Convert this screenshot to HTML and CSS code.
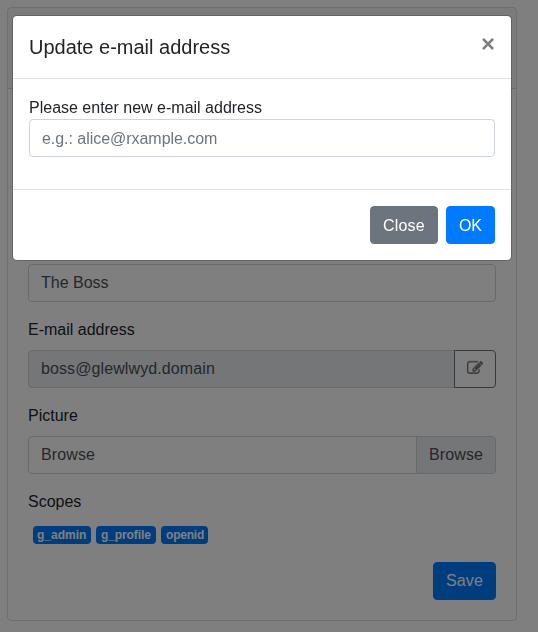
FILE: index.html
```html
<!DOCTYPE html>
<html lang="en">
<head>
<meta charset="utf-8">
<title>Profile</title>
<link rel="stylesheet" href="styles.css">
</head>
<body>
<main class="card">
  <div class="card-header"></div>
  <form class="card-body">
    <div class="group group-name">
      <div class="control">The Boss</div>
    </div>
    <div class="group">
      <div class="label">E-mail address</div>
      <div class="input-group">
        <div class="control control-disabled">boss@glewlwyd.domain</div>
        <button type="button" class="btn btn-outline">
          <svg class="icon" viewBox="0 0 1792 1792"><path d="M888 1184l116-116-152-152-116 116v56h96v96h56zm440-720q-16-16-33 1l-350 350q-17 17-1 33t33-1l350-350q17-17 1-33zm80 594v190q0 119-84.500 203.500t-203.500 84.500h-832q-119 0-203.500-84.500t-84.500-203.500v-832q0-119 84.500-203.500t203.500-84.500h832q63 0 117 25 15 7 18 23 3 17-9 29l-49 49q-14 14-32 8-23-6-45-6h-832q-66 0-113 47t-47 113v832q0 66 47 113t113 47h832q66 0 113-47t47-113v-126q0-13 9-22l64-64q15-15 35-7t20 29zm-96-738l288 288-672 672h-288v-288zm444 132l-92 92-288-288 92-92q28-28 68-28t68 28l152 152q28 28 28 68t-28 68z"/></svg>
        </button>
      </div>
    </div>
    <div class="group">
      <div class="label">Picture</div>
      <div class="input-group">
        <div class="control file-name">Browse</div>
        <div class="addon">Browse</div>
      </div>
    </div>
    <div class="label">Scopes</div>
    <div class="badges">
      <span class="badge">g_admin</span>
      <span class="badge">g_profile</span>
      <span class="badge">openid</span>
    </div>
    <div class="actions">
      <button type="button" class="btn btn-primary btn-save">Save</button>
    </div>
  </form>
</main>
<div class="backdrop">
  <section class="modal">
    <header class="modal-header">
      <h5 class="modal-title">Update e-mail address</h5>
      <button type="button" class="close">×</button>
    </header>
    <div class="modal-body">
      <div class="prompt">Please enter new e-mail address</div>
      <input class="control" type="text" placeholder="e.g.: alice@rxample.com">
    </div>
    <footer class="modal-footer">
      <button type="button" class="btn btn-secondary">Close</button>
      <button type="button" class="btn btn-primary">OK</button>
    </footer>
  </section>
</div>
</body>
</html>
```
FILE: styles.css
```css
*, *::before, *::after {
  box-sizing: border-box;
}

body {
  margin: 0;
  height: 632px;
  overflow: hidden;
  padding: 7px 21px 0 7px;
  font: 400 16px/1.5 "Liberation Sans", Arial, sans-serif;
  color: #212529;
  background: #fff;
}

.card {
  border: 1px solid rgba(0, 0, 0, .125);
  border-radius: 4px;
}

.card-header {
  height: 81px;
  background: rgba(0, 0, 0, .03);
  border-bottom: 1px solid rgba(0, 0, 0, .125);
}

.card-body {
  padding: 20px;
}

.group {
  margin-bottom: 16px;
}

.group-name {
  padding-top: 155px;
}

.label {
  margin-bottom: 8px;
}

.control {
  display: block;
  width: 100%;
  height: 38px;
  padding: 6px 12px;
  font: inherit;
  color: #495057;
  background: #fff;
  border: 1px solid #ced4da;
  border-radius: 4px;
}

.control::placeholder {
  color: #6c757d;
  opacity: 1;
}

.control-disabled {
  letter-spacing: .1px;
  background: #e9ecef;
}

.input-group {
  display: flex;
}

.input-group .control {
  flex: 1;
  border-radius: 4px 0 0 4px;
}

.input-group .btn,
.addon {
  margin-left: -1px;
  border-radius: 0 4px 4px 0;
}

.file-name,
.addon {
  letter-spacing: .12px;
}

.addon {
  width: 80px;
  padding: 6px 12px;
  color: #495057;
  background: #e9ecef;
  border: 1px solid #ced4da;
}

.btn {
  height: 38px;
  padding: 6px 12px;
  font: inherit;
  color: #fff;
  border: 1px solid transparent;
  border-radius: 4px;
}

.btn-primary {
  background: #007bff;
  border-color: #007bff;
}

.btn-secondary {
  width: 68px;
  letter-spacing: .15px;
  background: #6c757d;
  border-color: #6c757d;
}

.btn-save {
  width: 63px;
  letter-spacing: .15px;
}

.btn-outline {
  width: 42px;
  padding: 5px 12px 7px;
  color: #6c757d;
  background: transparent;
  border-color: #6c757d;
}

.icon {
  display: block;
  width: 16px;
  height: 16px;
  fill: currentColor;
  stroke: currentColor;
  stroke-width: 40;
}

.badges {
  display: flex;
  gap: 5px;
  height: 40px;
  padding: 4px 5px 0;
}

.badge {
  height: 18px;
  padding: 3px 4px;
  font-size: 12px;
  font-weight: 700;
  line-height: 12px;
  color: #fff;
  background: #007bff;
  border-radius: 4px;
}

.badge:nth-child(1) {
  width: 58px;
}

.badge:nth-child(2) {
  width: 60px;
  padding-left: 5px;
  letter-spacing: -.1px;
}

.badge:nth-child(3) {
  width: 47px;
  padding-left: 5px;
  letter-spacing: -.2px;
}

.actions {
  display: flex;
  justify-content: flex-end;
}

.backdrop {
  position: fixed;
  inset: 0;
  padding: 15px 26px 0 12px;
  background: rgba(0, 0, 0, .5);
}

.modal {
  background: #fff;
  background-clip: padding-box;
  border: 1px solid rgba(0, 0, 0, .2);
  border-radius: 5px;
}

.modal-header {
  display: flex;
  justify-content: space-between;
  align-items: flex-start;
  height: 63px;
  padding: 16px;
  border-bottom: 1px solid #dee2e6;
}

.modal-title {
  margin: 0;
  font-size: 20px;
  font-weight: 500;
  line-height: 30px;
}

.close {
  padding: 0;
  font: 700 24px/24px "Liberation Sans", Arial, sans-serif;
  color: #000;
  background: none;
  border: 0;
  opacity: .5;
}

.modal-body {
  height: 110px;
  padding: 16px;
}

.prompt {
  height: 24px;
  padding-top: 1px;
}

.modal-body .control {
  padding: 8px 12px 6px;
  letter-spacing: -.04px;
}

.modal-footer {
  display: flex;
  justify-content: flex-end;
  gap: 8px;
  padding: 16px;
  border-top: 1px solid #dee2e6;
}

.modal-footer .btn {
  padding: 7px 12px 5px;
}
```
